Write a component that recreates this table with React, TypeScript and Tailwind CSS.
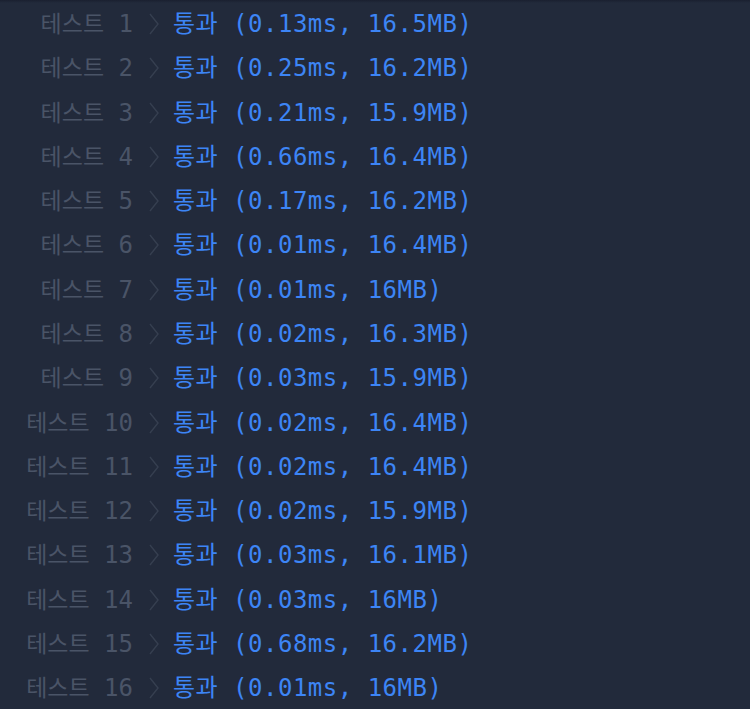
const results = [
  { n: 1, time: "0.13ms", mem: "16.5MB" },
  { n: 2, time: "0.25ms", mem: "16.2MB" },
  { n: 3, time: "0.21ms", mem: "15.9MB" },
  { n: 4, time: "0.66ms", mem: "16.4MB" },
  { n: 5, time: "0.17ms", mem: "16.2MB" },
  { n: 6, time: "0.01ms", mem: "16.4MB" },
  { n: 7, time: "0.01ms", mem: "16MB" },
  { n: 8, time: "0.02ms", mem: "16.3MB" },
  { n: 9, time: "0.03ms", mem: "15.9MB" },
  { n: 10, time: "0.02ms", mem: "16.4MB" },
  { n: 11, time: "0.02ms", mem: "16.4MB" },
  { n: 12, time: "0.02ms", mem: "15.9MB" },
  { n: 13, time: "0.03ms", mem: "16.1MB" },
  { n: 14, time: "0.03ms", mem: "16MB" },
  { n: 15, time: "0.68ms", mem: "16.2MB" },
  { n: 16, time: "0.01ms", mem: "16MB" },
];

function Chevron() {
  return (
    <svg width="10" height="22" viewBox="0 0 10 22" className="shrink-0">
      <path d="M1 1 L9 11 L1 21" fill="none" stroke="#363f50" strokeWidth="1.4" />
    </svg>
  );
}

export default function App() {
  return (
    <div
      className="relative w-[750px] h-[709px] overflow-hidden bg-[#222a3b] text-[24px]"
      style={{ fontFamily: '"DejaVu Sans Mono", "Noto Sans CJK KR", monospace' }}
    >
      {/* top edge shadow */}
      <div className="absolute top-0 left-0 right-0 h-[3px] bg-gradient-to-b from-[#1a2030] to-transparent" />
      <div className="flex flex-col pt-[2px]">
        {results.map((r) => (
          <div key={r.n} className="flex items-center h-[44.27px] whitespace-pre leading-none">
            <span className="w-[133px] text-right text-[#4a5467]">
              <span className="text-[23px]">테스트</span> {r.n}
            </span>
            <span className="ml-[16px]">
              <Chevron />
            </span>
            <span className="ml-[14px] text-[#3d85f5] tracking-[0.5px]">
              통과 ({r.time}, {r.mem})
            </span>
          </div>
        ))}
      </div>
    </div>
  );
}
